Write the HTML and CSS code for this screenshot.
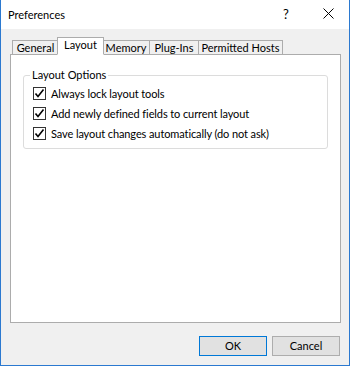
FILE: index.html
```html
<!DOCTYPE html>
<html>
<head>
<meta charset="utf-8">
<link rel="stylesheet" href="styles.css">
</head>
<body>
<div class="window">
  <div class="titlebar">
    <span class="title">Preferences</span>
    <span class="help">?</span>
    <span class="close">
      <svg width="11" height="11" viewBox="0 0 11 11"><path d="M0.5 0.5 L10.5 10.5 M10.5 0.5 L0.5 10.5" stroke="#000" stroke-width="1" fill="none"/></svg>
    </span>
  </div>
  <div class="content">
    <div class="tabs">
      <div class="tab t-general">General</div>
      <div class="tab t-layout active">Layout</div>
      <div class="tab t-memory">Memory</div>
      <div class="tab t-plugins">Plug-Ins</div>
      <div class="tab t-hosts">Permitted Hosts</div>
    </div>
    <div class="panel">
      <fieldset class="group">
        <legend>Layout Options</legend>
        <div class="row"><span class="cb"><svg width="11" height="11" viewBox="0 0 11 11"><path d="M1.5 5.5 L4 8.5 L9.5 1.5" stroke="#000" stroke-width="1.6" fill="none"/></svg></span><span>Always lock layout tools</span></div>
        <div class="row"><span class="cb"><svg width="11" height="11" viewBox="0 0 11 11"><path d="M1.5 5.5 L4 8.5 L9.5 1.5" stroke="#000" stroke-width="1.6" fill="none"/></svg></span><span>Add newly defined fields to current layout</span></div>
        <div class="row"><span class="cb"><svg width="11" height="11" viewBox="0 0 11 11"><path d="M1.5 5.5 L4 8.5 L9.5 1.5" stroke="#000" stroke-width="1.6" fill="none"/></svg></span><span>Save layout changes automatically (do not ask)</span></div>
      </fieldset>
    </div>
    <div class="buttons">
      <div class="btn default">OK</div>
      <div class="btn">Cancel</div>
    </div>
  </div>
</div>
</body>
</html>
```
FILE: styles.css
```css
* { box-sizing: border-box; }
html, body { margin: 0; padding: 0; }
body {
  font-family: "Lato", "Noto Sans", sans-serif;
  font-size: 11px;
  color: #000;
  background: #fff;
}
.window {
  width: 350px;
  height: 366px;
  border: 1px solid #2b79d0;
  border-top: none;
  background: #f0f0f0;
  display: flex;
  flex-direction: column;
}
.titlebar {
  height: 29px;
  background: #fff;
  display: flex;
  align-items: center;
  padding-left: 7px;
  flex: none;
}
.title { flex: 1; font-size: 11px; margin-top: -1px; }
.help { width: 14px; font-size: 13px; margin-right: 26px; margin-top: -2px; }
.close { width: 11px; height: 11px; margin-right: 15px; display: flex; margin-top: -2px; }
.content {
  flex: 1;
  padding: 8px 9px 0 9px;
  display: flex;
  flex-direction: column;
}
.tabs {
  display: flex;
  align-items: flex-end;
  padding-left: 2px;
  height: 18px;
  margin-bottom: -1px;
  position: relative;
  z-index: 1;
}
.tab {
  height: 15px;
  border: 1px solid #acacac;
  background: #f0f0f0;
  text-align: center;
  line-height: 13px;
  white-space: nowrap;
  margin-right: -1px;
}
.tab.active {
  height: 18px;
  background: #fff;
  border-bottom-color: #fff;
  line-height: 13px;
  margin-left: -1px;
  margin-right: -2px;
  position: relative;
  z-index: 2;
}
.t-general { width: 47px; }
.t-layout { width: 47px; }
.t-memory { width: 48px; }
.t-plugins { width: 50px; }
.t-hosts { width: 85px; }
.panel {
  height: 269px;
  width: 331px;
  border: 1px solid #acacac;
  background: #fff;
  padding: 13px 12px 0 12px;
  flex: none;
}
.group {
  margin: 0;
  width: 305px;
  height: 81px;
  border: 1px solid #dcdcdc;
  border-radius: 3px;
  padding: 1px 0 0 9px;
  letter-spacing: -0.1px;
}
.group legend {
  padding: 0 2px;
  margin-left: -3px;
  line-height: 14px;
  letter-spacing: 0;
}
.row {
  display: flex;
  align-items: center;
  height: 20px;
}
.cb {
  width: 13px;
  height: 13px;
  border: 1px solid #333;
  background: #fff;
  display: flex;
  align-items: center;
  justify-content: center;
  margin-right: 5px;
  flex: none;
}
.buttons {
  display: flex;
  justify-content: flex-end;
  gap: 5px;
  margin-top: 13px;
}
.btn {
  width: 68px;
  height: 20px;
  border: 1px solid #adadad;
  background: #e1e1e1;
  text-align: center;
  line-height: 18px;
}
.btn.default { border-color: #0078d7; }
```
